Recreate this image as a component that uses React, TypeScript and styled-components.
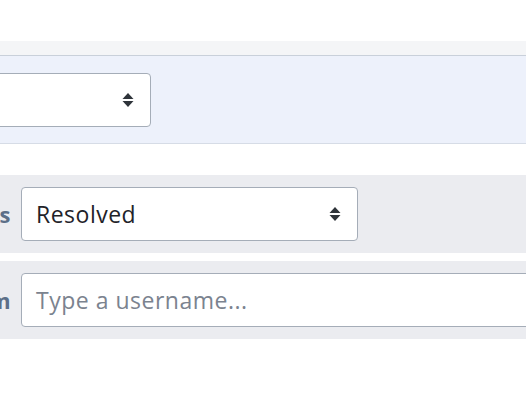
import React from "react";
import styled, { createGlobalStyle } from "styled-components";

const GlobalStyle = createGlobalStyle`
    html, body {
        margin: 0;
        padding: 0;
        background: #ffffff;
        overflow: hidden;
    }
    body {
        font-family: "Open Sans", "Liberation Sans", sans-serif;
    }
`;

const Page = styled.div`
    width: 526px;
    height: 394px;
    padding-top: 41px;
    box-sizing: border-box;
    overflow: hidden;
`;

const HeaderStrip = styled.div`
    height: 14px;
    background: #f4f5f7;
    border-bottom: 1px solid #c9d0da;
`;

const FilterBand = styled.div`
    display: flex;
    align-items: center;
    height: 88px;
    background: #edf1fb;
    border-bottom: 1px solid #d6dce6;
    box-sizing: border-box;
    overflow: hidden;
`;

const Rows = styled.div`
    display: flex;
    flex-direction: column;
    gap: 8px;
    margin-top: 31px;
`;

const Row = styled.div`
    display: flex;
    align-items: center;
    gap: 10px;
    height: 78px;
    padding: 12px 0;
    box-sizing: border-box;
    background: #ebecf0;
    overflow: hidden;
`;

const Label = styled.div`
    flex: 0 0 11px;
    display: flex;
    justify-content: flex-end;
    overflow: hidden;
    white-space: nowrap;
    font-size: 22px;
    font-weight: 700;
    letter-spacing: 0.5px;
    color: #5c6f88;
`;

const Field = styled.div<{ $width: string; $offset?: number }>`
    position: relative;
    flex: 0 0 ${p => p.$width};
    height: 54px;
    margin-left: ${p => (p.$offset ? `${p.$offset}px` : "0")};
    background: #ffffff;
    border: 1px solid #a5adb8;
    border-radius: 4px;
    box-sizing: border-box;
    display: flex;
    align-items: center;
    padding: 0 14px;
    font-size: 23px;
    letter-spacing: 0.5px;
    color: #1f2329;
`;

const Placeholder = styled.span`
    color: #7b838f;
`;

const Arrows = styled.svg`
    position: absolute;
    right: 16px;
    top: 50%;
    transform: translateY(-50%);
`;

const SortArrows: React.FC = () => (
    <Arrows width="12" height="16" viewBox="0 0 12 16">
        <path d="M6 1 L11.5 7 L0.5 7 Z" fill="#2f343a" />
        <path d="M6 15 L11.5 9 L0.5 9 Z" fill="#2f343a" />
    </Arrows>
);

export const App: React.FC = () => {
    return (
        <Page>
            <GlobalStyle />
            <HeaderStrip />
            <FilterBand>
                <Field $width="172px" $offset={-21}>
                    <SortArrows />
                </Field>
            </FilterBand>
            <Rows>
                <Row>
                    <Label>Status</Label>
                    <Field $width="337px">
                        Resolved
                        <SortArrows />
                    </Field>
                </Row>
                <Row>
                    <Label>From</Label>
                    <Field $width="520px">
                        <Placeholder>Type a username...</Placeholder>
                    </Field>
                </Row>
            </Rows>
        </Page>
    );
};

export default App;
